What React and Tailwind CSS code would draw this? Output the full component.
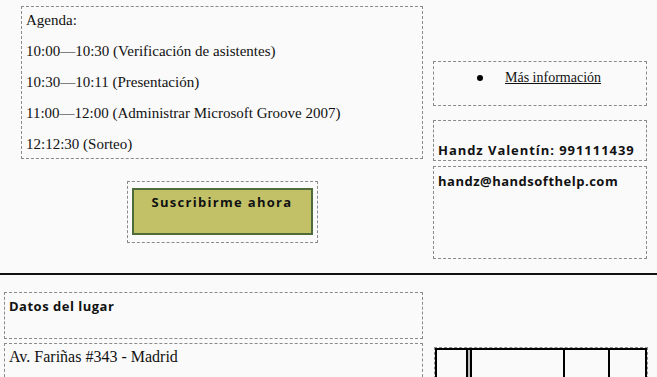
import React from "react";

const serif = "font-['Liberation_Serif',serif]";
const sans = "font-['Open_Sans',sans-serif]";

const agenda = [
  "Agenda:",
  "10:00—10:30 (Verificación de asistentes)",
  "10:30—10:11 (Presentación)",
  "11:00—12:00 (Administrar Microsoft Groove 2007)",
  "12:12:30 (Sorteo)",
];

const App = () => {
  return (
    <div className="w-[657px] h-[377px] overflow-hidden bg-[#fafafa] text-[#111]">
      {/* parte de arriba */}
      <div className="flex h-[273px]">
        <div className="ml-[21px] w-[402px] pt-[6px]">
          <div className={`h-[153px] border border-dashed border-[#8a8a8a] px-[4px] pt-[4px] ${serif} text-[15px]`}>
            {agenda.map((line) => (
              <p key={line} className="h-[31px] leading-[18px]">
                {line}
              </p>
            ))}
          </div>
          <div className="flex justify-center mt-[22px]">
            <div className="w-[191px] h-[62px] border border-dashed border-[#8a8a8a] px-[4px] pt-[6px]">
              <button
                className={`w-full h-[47px] bg-[#c2c168] border-2 border-[#4f6b3a] ${sans} font-bold text-[13px] tracking-[1.3px] whitespace-nowrap flex justify-center items-start pt-[3px]`}
              >
                Suscribirme ahora
              </button>
            </div>
          </div>
        </div>
        <div className="ml-[10px] w-[214px] pt-[61px]">
          <div className={`h-[45px] border border-dashed border-[#8a8a8a] ${serif} text-[14px] pt-[5px]`}>
            <div className="flex items-center pl-[43px]">
              <span className="w-[6px] h-[6px] rounded-full bg-black" />
              <a href="#" className="ml-[22px] underline">
                Más información
              </a>
            </div>
          </div>
          <div className={`mt-[14px] h-[41px] border border-dashed border-[#8a8a8a] ${sans} font-bold text-[13px] tracking-[0.95px] whitespace-nowrap flex items-end px-[4px]`}>
            Handz Valentín: 991111439
          </div>
          <div className={`mt-[5px] h-[93px] border border-dashed border-[#8a8a8a] ${sans} font-bold text-[13px] tracking-[0.5px] whitespace-nowrap px-[4px] pt-[5px]`}>
            handz@handsofthelp.com
          </div>
        </div>
      </div>

      <hr className="border-0 h-[2px] bg-[#111]" />

      {/* datos del lugar */}
      <div className="flex pt-[17px]">
        <div className="ml-[4px] w-[419px]">
          <div className={`h-[47px] border border-dashed border-[#8a8a8a] ${sans} font-bold text-[13px] tracking-[0.5px] px-[4px] pt-[4px]`}>
            Datos del lugar
          </div>
          <div className={`mt-[4px] h-[60px] border border-dashed border-[#8a8a8a] ${serif} text-[16px] px-[4px] pt-[1px]`}>
            Av. Fariñas #343 - Madrid
          </div>
        </div>
        <div className="ml-[11px] w-[214px] pt-[55px]">
          <div className="border border-dashed border-[#8a8a8a] p-0">
            <table className="w-full border-collapse h-[40px]">
              <tbody>
                <tr>
                  <td className="w-[31px] border-2 border-black"></td>
                  <td className="w-[4px] bg-[#bdbdbd] border-2 border-black"></td>
                  <td className="w-[93px] border-2 border-black"></td>
                  <td className="w-[45px] border-2 border-black"></td>
                  <td className="border-2 border-black"></td>
                </tr>
              </tbody>
            </table>
          </div>
        </div>
      </div>
    </div>
  );
};

export default App;
